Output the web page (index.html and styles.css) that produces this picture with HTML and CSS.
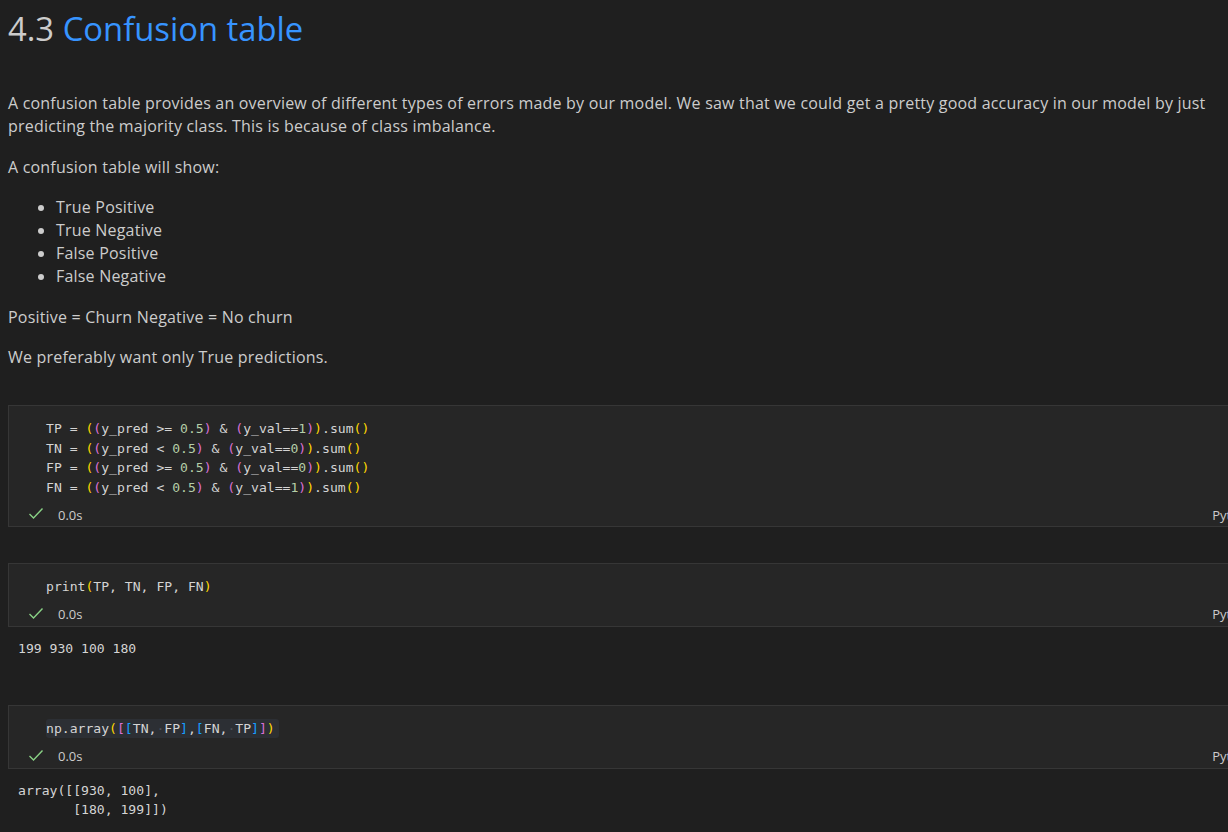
FILE: index.html
```html
<!DOCTYPE html>
<html>
<head>
<meta charset="utf-8">
<link rel="stylesheet" href="styles.css">
</head>
<body>
<div class="notebook">
  <section class="md">
    <h1 class="title"><span class="num">4.3</span> <span class="link">Confusion table</span></h1>
    <p class="lead">A confusion table provides an overview of different types of errors made by our model. We saw that we could get a pretty good accuracy in our model by just predicting the majority class. This is because of class imbalance.</p>
    <p>A confusion table will show:</p>
    <ul>
      <li>True Positive</li>
      <li>True Negative</li>
      <li>False Positive</li>
      <li>False Negative</li>
    </ul>
    <p>Positive = Churn Negative = No churn</p>
    <p class="last">We preferably want only True predictions.</p>
  </section>

  <section class="cell cell-first">
    <pre class="code">TP = <span class="b1">(</span><span class="b2">(</span>y_pred &gt;= <span class="n">0.5</span><span class="b2">)</span> &amp; <span class="b2">(</span>y_val==<span class="n">1</span><span class="b2">)</span><span class="b1">)</span>.sum<span class="b1">()</span>
TN = <span class="b1">(</span><span class="b2">(</span>y_pred &lt; <span class="n">0.5</span><span class="b2">)</span> &amp; <span class="b2">(</span>y_val==<span class="n">0</span><span class="b2">)</span><span class="b1">)</span>.sum<span class="b1">()</span>
FP = <span class="b1">(</span><span class="b2">(</span>y_pred &gt;= <span class="n">0.5</span><span class="b2">)</span> &amp; <span class="b2">(</span>y_val==<span class="n">0</span><span class="b2">)</span><span class="b1">)</span>.sum<span class="b1">()</span>
FN = <span class="b1">(</span><span class="b2">(</span>y_pred &lt; <span class="n">0.5</span><span class="b2">)</span> &amp; <span class="b2">(</span>y_val==<span class="n">1</span><span class="b2">)</span><span class="b1">)</span>.sum<span class="b1">()</span></pre>
    <div class="status">
      <svg class="check" width="16" height="16" viewBox="0 0 16 16"><path d="M1.5 8 L5.5 12 L14.5 2.5" fill="none" stroke="#89d185" stroke-width="1.4"/></svg>
      <span class="time">0.0s</span>
      <span class="lang">Python</span>
    </div>
  </section>

  <section class="cell">
    <pre class="code">print<span class="b1">(</span>TP, TN, FP, FN<span class="b1">)</span></pre>
    <div class="status">
      <svg class="check" width="16" height="16" viewBox="0 0 16 16"><path d="M1.5 8 L5.5 12 L14.5 2.5" fill="none" stroke="#89d185" stroke-width="1.4"/></svg>
      <span class="time">0.0s</span>
      <span class="lang">Python</span>
    </div>
  </section>
  <pre class="output out-short">199 930 100 180</pre>

  <section class="cell">
    <pre class="code"><span class="hl">np.array<span class="b1">(</span><span class="b2">[</span><span class="b3">[</span>TN,<span class="ws">·</span>FP<span class="b3">]</span>,<span class="b3">[</span>FN,<span class="ws">·</span>TP<span class="b3">]</span><span class="b2">]</span><span class="b1">)</span></span></pre>
    <div class="status">
      <svg class="check" width="16" height="16" viewBox="0 0 16 16"><path d="M1.5 8 L5.5 12 L14.5 2.5" fill="none" stroke="#89d185" stroke-width="1.4"/></svg>
      <span class="time">0.0s</span>
      <span class="lang">Python</span>
    </div>
  </section>
  <pre class="output">array([[930, 100],
       [180, 199]])</pre>
</div>
</body>
</html>
```

FILE: styles.css
```css
html, body {
  margin: 0;
  padding: 0;
  background: #1f1f1f;
  overflow: hidden;
}

.notebook {
  width: 1228px;
  height: 832px;
  overflow: hidden;
  padding-left: 8px;
  box-sizing: border-box;
  color: #cccccc;
  font-family: "Open Sans", "Noto Sans", sans-serif;
}

.md {
  width: 1225px;
  font-size: 16px;
  letter-spacing: 0.2px;
  line-height: 23px;
}

.title {
  margin: 0;
  padding-top: 7px;
  height: 44px;
  font-size: 32.8px;
  line-height: 44px;
  font-weight: 400;
  letter-spacing: 0;
}

.title .num { color: #cccccc; }
.title .link { color: #3794ff; }

.md p {
  margin: 18px 0 0;
}

.md p.lead {
  margin-top: 41px;
}

.md p.last {
  margin-top: 17px;
}

.md ul {
  margin: 17px 0 0;
  padding-left: 48px;
}

.cell {
  width: 1260px;
  margin-top: 36px;
  background: #262626;
  border: 1px solid #363636;
  box-sizing: border-box;
}

.code {
  margin: 0;
  padding: 13px 0 4px 37px;
  font-family: "DejaVu Sans Mono", "Liberation Mono", monospace;
  font-size: 13.1px;
  line-height: 19.6px;
  color: #d4d4d4;
}

.b1 { color: #ffd700; }
.b2 { color: #da70d6; }
.b3 { color: #179fff; }
.n { color: #b5cea8; }

.hl {
  background: #2c2f34;
  border-radius: 3px;
  padding: 2px 4px 2px 0;
}

.ws { color: #4e5157; }

.status {
  display: flex;
  align-items: center;
  height: 25px;
  font-size: 13px;
  color: #cccccc;
}

.check {
  margin-left: 19px;
  margin-top: 1px;
}

.time {
  margin-left: 14px;
  margin-top: 2px;
}

.lang {
  margin-left: auto;
  margin-right: 12px;
  margin-top: 2px;
}

.output {
  margin: 0;
  padding: 12px 0 0 10px;
  font-family: "DejaVu Sans Mono", "Liberation Mono", monospace;
  font-size: 13.1px;
  line-height: 19.3px;
  color: #d4d4d4;
}

.out-short {
  margin-bottom: 47px;
}
```
